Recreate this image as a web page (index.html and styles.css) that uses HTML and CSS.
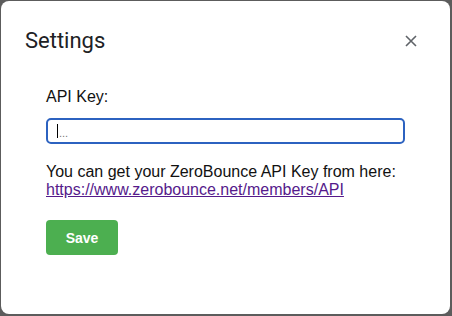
FILE: index.html
```html
<!DOCTYPE html>
<html>
<head>
<meta charset="utf-8">
<link rel="stylesheet" href="styles.css">
</head>
<body>
<div class="dialog">
  <div class="header">
    <h1 class="title">Settings</h1>
    <button class="close" aria-label="Close">
      <svg width="12" height="12" viewBox="0 0 12 12"><path d="M1 1L11 11M11 1L1 11" stroke="#5f6368" stroke-width="1.6" fill="none"/></svg>
    </button>
  </div>
  <div class="content">
    <label class="label">API Key:</label>
    <div class="input"><span class="caret"></span><span class="ph">...</span></div>
    <p class="help">You can get your ZeroBounce API Key from here:<br><a class="link" href="#">https://www.zerobounce.net/members/API</a></p>
    <button class="save">Save</button>
  </div>
</div>
</body>
</html>
```

FILE: styles.css
```css
html, body { margin: 0; padding: 0; }
body {
  background: #5c5c5c;
  width: 452px;
  height: 316px;
  padding: 1px 2px 2px 1px;
  box-sizing: border-box;
}
.dialog {
  background: #fff;
  border-radius: 8px;
  height: 313px;
  box-sizing: border-box;
  padding: 26px 24px 0 24px;
}
.header {
  display: flex;
  justify-content: space-between;
  align-items: center;
}
.title {
  margin: 0;
  font-family: Roboto, "Noto Sans", sans-serif;
  font-weight: 400;
  font-size: 22px;
  line-height: 28px;
  color: #202124;
}
.close {
  border: 0;
  background: none;
  padding: 0;
  width: 12px;
  height: 12px;
  margin-right: 9px;
  display: flex;
}
.content {
  padding: 32px 21px 0 21px;
  font-family: "Liberation Sans", Arial, sans-serif;
  font-size: 16px;
  color: #111;
}
.label { display: block; line-height: 20px; }
.input {
  margin-top: 11px;
  height: 26px;
  width: 359px;
  box-sizing: border-box;
  border: 2px solid #2c62c0;
  border-radius: 5px;
  display: flex;
  align-items: center;
  padding-left: 9px;
}
.caret { width: 1px; height: 14px; background: #000; }
.ph { font-size: 11px; color: #777; margin-left: 1px; margin-top: 4px; }
.help { margin: 19px 0 0 0; line-height: 18px; }
.link { color: #551a8b; text-decoration: underline; }
.save {
  display: block;
  margin-top: 21px;
  width: 72px;
  height: 35px;
  border: 0;
  border-radius: 4px;
  background: #4caf50;
  color: #fff;
  font-family: "Liberation Sans", Arial, sans-serif;
  font-weight: 700;
  font-size: 14px;
}
```
